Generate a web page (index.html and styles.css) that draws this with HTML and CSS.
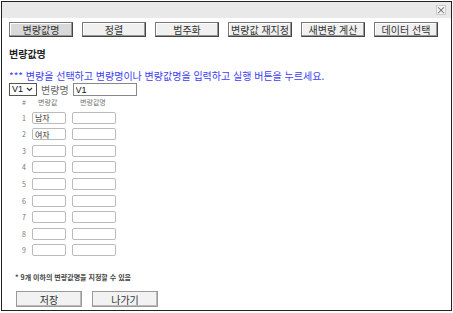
FILE: index.html
```html
<!DOCTYPE html>
<html lang="ko">
  <head>
    <meta charset="UTF-8" />
    <title>변량값명</title>
    <link rel="stylesheet" href="styles.css">
  </head>
  <body>
    <div class="dialog">
      <!-- 상단 바 -->
      <div class="titlebar"><span class="close">×</span></div>

      <!-- 메뉴 버튼 -->
      <div class="toolbar">
        <button class="tab active">변량값명</button>
        <button class="tab">정렬</button>
        <button class="tab">범주화</button>
        <button class="tab">변량값 재지정</button>
        <button class="tab">새변량 계산</button>
        <button class="tab">데이터 선택</button>
      </div>

      <div class="content">
        <h3 class="title">변량값명</h3>
        <p class="guide">*** 변량을 선택하고 변량명이나 변량값명을 입력하고 실행 버튼을 누르세요.</p>
        <div class="varline">
          <select class="varsel"><option>V1</option></select>
          <span class="varlabel">변량명</span>
          <input class="varname" type="text" value="V1">
        </div>

        <div class="grid" id="grid">
          <span class="head">#</span>
          <span class="head">변량값</span>
          <span class="head">변량값명</span>
        </div>

        <p class="note">* 9개 이하의 변량값명을 지정할 수 있음</p>

        <div class="actions">
          <button class="btn">저장</button>
          <button class="btn">나가기</button>
        </div>
      </div>
    </div>

    <script>
      // 9개 행 생성
      const values = ["남자", "여자"];
      const grid = document.getElementById("grid");
      for (let i = 1; i <= 9; i++) {
        const num = document.createElement("span");
        num.className = "num";
        num.textContent = i;
        const val = document.createElement("input");
        val.className = "cell val";
        val.value = values[i - 1] || "";
        const label = document.createElement("input");
        label.className = "cell label";
        grid.append(num, val, label);
      }
    </script>
  </body>
</html>
```

FILE: styles.css
```css
body {
  margin: 0;
  font-family: "Noto Sans CJK KR", "Noto Sans", sans-serif;
  background: #fff;
  color: #333;
}
/* 대화상자 */
.dialog {
  margin: 1px;
  width: 449px;
  height: 308px;
  border: 1px solid #222;
  display: flex;
  flex-direction: column;
}
.titlebar {
  height: 16px;
  background: #e9e9e9;
  display: flex;
  justify-content: flex-end;
  align-items: center;
  padding-right: 5px;
}
.close {
  font-size: 10px;
  line-height: 10px;
  width: 8px;
  height: 8px;
  border: 1px solid #ccc;
  background: #f4f4f4;
  color: #555;
  display: flex;
  align-items: center;
  justify-content: center;
}
/* 메뉴 버튼 */
.toolbar {
  display: flex;
  gap: 9px;
  padding: 4px 0 0 7px;
}
.tab, .btn {
  width: 64px;
  height: 15px;
  padding: 0;
  font-family: inherit;
  font-size: 10px;
  line-height: 11px;
  color: #333;
  background: #f0f0f0;
  border: 1px solid #777;
  border-right-color: #444;
  border-bottom-color: #444;
  box-shadow: inset -1px -1px 0 #999, inset 1px 1px 0 #fff;
}
.tab.active {
  background: #d9d9d9;
}
/* 본문 */
.content {
  padding: 0 7px;
  display: flex;
  flex-direction: column;
}
.title {
  margin: 10px 0 0;
  font-size: 10px;
  font-weight: bold;
  color: #222;
  line-height: 14px;
}
.guide {
  margin: 8px 0 0;
  font-size: 10px;
  line-height: 13px;
  color: #3d3df0;
}
.varline {
  display: flex;
  align-items: center;
  gap: 4px;
  margin-top: 0;
}
.varsel {
  appearance: none;
  width: 28px;
  height: 13px;
  padding: 0 0 0 2px;
  font-family: "Liberation Sans", sans-serif;
  font-size: 9px;
  line-height: 11px;
  border: 1px solid #555;
  border-radius: 0;
  color: #111;
  background: #fff url("data:image/svg+xml,%3Csvg xmlns='http://www.w3.org/2000/svg' width='7' height='5' viewBox='0 0 7 5'%3E%3Cpath d='M1 1l2.5 2.5L6 1' fill='none' stroke='%23333' stroke-width='1.2'/%3E%3C/svg%3E") no-repeat right 3px center;
}
.varlabel {
  font-size: 10px;
  color: #666;
  margin-left: 0;
}
.varname {
  width: 58px;
  height: 9px;
  padding: 1px 2px;
  font-family: "Liberation Sans", sans-serif;
  font-size: 9px;
  border: 1px solid #888;
  color: #111;
}
/* 변량값 목록 */
.grid {
  display: grid;
  grid-template-columns: 23px 40px 42px;
  grid-template-rows: 10px;
  grid-auto-rows: 12px;
  row-gap: 4.6px;
  align-items: center;
  margin-top: 0;
}
.head {
  font-size: 7px;
  color: #777;
  line-height: 10px;
  white-space: nowrap;
}
.head:nth-child(1) {
  padding-left: 13px;
}
.head:nth-child(2) {
  padding-left: 6px;
}
.head:nth-child(3) {
  padding-left: 8px;
}
.num {
  font-size: 7px;
  color: #777;
  padding-left: 13px;
}
.cell {
  height: 10px;
  padding: 0 2px;
  border: 1px solid #bbb;
  border-radius: 2px;
  font-family: inherit;
  font-size: 8px;
  color: #333;
  box-sizing: content-box;
}
.val {
  width: 28px;
}
.label {
  width: 38px;
}
.note {
  margin: 16px 0 0 6px;
  font-size: 7px;
  font-weight: bold;
  color: #444;
}
.actions {
  display: flex;
  gap: 10px;
  margin-top: 9px;
  padding-left: 7px;
}
.btn {
  width: 66px;
  height: 16px;
  background: #f2f2f2;
  border: 1px solid #999;
  box-shadow: inset -1px -1px 0 #bbb;
}
```
